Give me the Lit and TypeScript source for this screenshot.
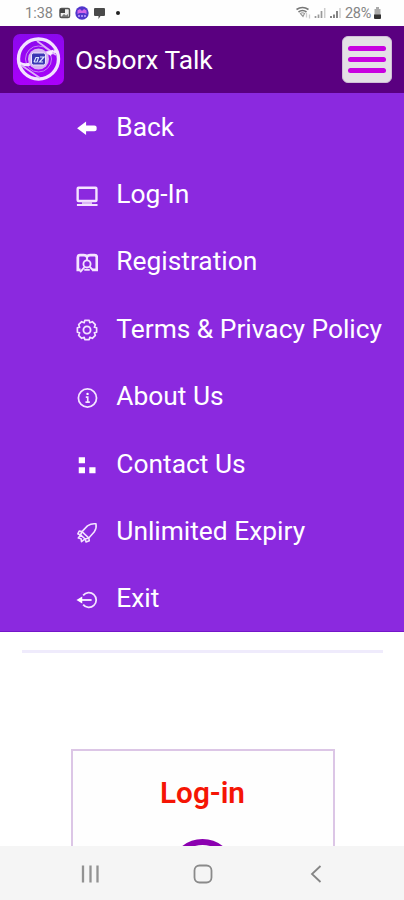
import { LitElement, html, css, svg } from "lit";
import { customElement } from "lit/decorators.js";

const icons = {
  back: svg`<path d="M1.200 12.300 11 5V9.200H20Q22.500 9.200 22.500 11.200v2.300Q22.500 15.500 20 15.500H11v4.200Z" fill="#fff"/>`,
  monitor: svg`<rect x="1.800" y="3" width="20.500" height="14.500" rx="1" stroke-width="2.600"/><path d="M1 21.800h22.500" stroke-width="2.200"/><path d="M6.500 19.500h11" stroke-width="2.400" stroke="#d9b5f4"/>`,
  register: svg`<path d="M5 19.500H2V6Q2 3.500 4.300 3.500H8.500Q11 3.500 12 5.200 13 3.500 15.500 3.500H20.400Q22.700 3.500 22.700 6V19.500H17.500" stroke-width="3"/><circle cx="12" cy="13" r="3.900" stroke-width="2"/><path d="M12 5v4M4.500 22 9.300 16.500M15 16 18 19.500M9 19.500h6" stroke-width="2"/>`,
  gear: svg`<path d="M9.600 1.500H14.400L15 4 17.800 2.900 21.100 6.200 20 9 22.500 9.600V14.400L20 15 21.100 17.800 17.800 21.100 15 20 14.400 22.500H9.600L9 20 6.200 21.100 2.900 17.800 4 15 1.500 14.400V9.600L4 9 2.900 6.200 6.200 2.900 9 4Z" stroke-width="1.800" stroke-linejoin="round"/><circle cx="12" cy="12" r="3.900" stroke-width="2"/>`,
  info: svg`<circle cx="12.500" cy="12" r="9.900" stroke-width="1.900"/><path d="M10.700 11h2.100v5.500M10.300 16.500h4.800" stroke-width="1.800"/><circle cx="12.600" cy="7.500" r="1.300" fill="#fff" stroke="none"/>`,
  blocks: svg`<path d="M3 3.500h6.800v6.500H3zM3 14.500h6.800V21H3zM14.500 14.500h6.800V21h-6.800z" fill="#fff"/>`,
  rocket: svg`<path d="M6.500 10.500 12.500 4.200Q17 1.200 21.800 2 22.800 6.500 19.800 11L14 17.500ZM6.500 10.500 3.500 9.800 2 13 5 14M5 14 2.500 17.500 5.500 18.200 6 21.500 10 18.500M6.500 10.500 5 14 10 18.500 14 17.500M10 18.500 11 21.800 14.500 20.500 14 17.500" stroke-width="1.700" stroke-linejoin="round"/>`,
  exit: svg`<path d="M7.800 7A8 8 0 1 1 7.800 17" stroke-width="1.900"/><path d="M4.500 12H17" stroke-width="2.100"/><path d="M.5 12 6.800 8.200v7.600Z" fill="#fff"/>`,
};

const entries = [
  { label: "Back", icon: icons.back },
  { label: "Log-In", icon: icons.monitor },
  { label: "Registration", icon: icons.register },
  { label: "Terms & Privacy Policy", icon: icons.gear },
  { label: "About Us", icon: icons.info },
  { label: "Contact Us", icon: icons.blocks },
  { label: "Unlimited Expiry", icon: icons.rocket },
  { label: "Exit", icon: icons.exit },
];

@customElement("status-bar")
class StatusBar extends LitElement {
  static styles = css`
    :host { display: flex; justify-content: space-between; align-items: center; box-sizing: border-box; height: 26px; padding: 0 22px 0 25px; background: #fefefe; color: #858585; font: 14.500px Roboto, sans-serif; }
    .group { display: flex; align-items: center; }
    .time { width: 33px; }
    .level { width: 28px; margin-left: 3px; white-space: nowrap; letter-spacing: -0.3px; }
    svg { display: block; }
  `;
  render() {
    return html`
      <div class="group">
        <span class="time">1:38</span>
        <svg width="66" height="16" viewBox="0 0 66 16" fill="none">
          <rect x="2" y="3.500" width="9.500" height="9" rx="1.500" fill="#eee" stroke="#555" stroke-width="1.500"/>
          <path d="M2 4h5v4H2Z" fill="#444"/><path d="m3 12 3-3 2 1.500L10 9v3Z" fill="#777"/>
          <circle cx="24" cy="8" r="6.700" fill="#5136cc"/>
          <path d="M19.500 9V5.500L22 4l2 2 2-2 2.500 1.500V9l-2-1h-5Z" fill="#d264e8"/>
          <path d="M21 12v-2M24 12v-2M27 12v-2" stroke="#c4a5ff" stroke-width="1.500"/>
          <path d="M37 3h9q1 0 1 1v6q0 1-1 1h-3.500l-2 3v-3H37q-1 0-1-1V4q0-1 1-1Z" fill="#4a4a4a"/>
          <circle cx="60" cy="8" r="2" fill="#222"/>
        </svg>
      </div>
      <div class="group">
        <svg width="46" height="16" viewBox="0 0 46 16" fill="none">
          <path d="M.5 4.500Q6.500.5 12.500 4.500M2.500 7Q6.500 4 10.500 7" stroke="#777" stroke-width="1.600"/>
          <path d="M4.500 8.500Q6.500 7 8.500 8.500L7 11.500Z" stroke="#999" stroke-width="1.200"/>
          <path d="M10.500 8v4.500M13.500 13.500V9.500" stroke="#ccc" stroke-width="1.300"/>
          <path d="M19.500 13v-2M22.500 13V9.500M25.500 13V6" stroke="#999" stroke-width="1.700"/><path d="M28.700 13V3" stroke="#ccc" stroke-width="1.500"/>
          <path d="M35 13v-2M38 13V9.500M41 13V6" stroke="#777" stroke-width="1.800"/><path d="M44 13V3" stroke="#ccc" stroke-width="1.500"/>
        </svg>
        <span class="level">28%</span>
        <svg width="9" height="14" viewBox="0 0 9 14"><path d="M3 1h3v2h1.500v6h-6V3H3Z" fill="#aaa"/><path d="M1 8.500h7V12q0 1-1 1H2q-1 0-1-1Z" fill="#333"/></svg>
      </div>`;
  }
}

@customElement("app-header")
class AppHeader extends LitElement {
  static styles = css`
    :host { display: flex; align-items: center; box-sizing: border-box; height: 67px; padding: 0 12px 0 13px; background: #5a0080; }
    h1 { margin: 0 auto 0 11px; color: #fff; font: 400 26.300px Roboto, sans-serif; }
    svg { display: block; }
    .toggle { display: flex; flex-direction: column; justify-content: center; gap: 5.500px; box-sizing: border-box; width: 50.500px; height: 47px; padding: 0 5px; border: 1px solid #d0bed8; border-radius: 6px; background: #e4e0e6; }
    .bar { height: 5.600px; border-radius: 3px; background: #c800e0; }
  `;
  render() {
    return html`
      <svg width="51" height="51" viewBox="0 0 51 51" fill="none">
        <defs><linearGradient id="tile" x2="0" y2="1"><stop stop-color="#8b08ee"/><stop offset="1" stop-color="#aa00fa"/></linearGradient></defs>
        <rect width="51" height="51" rx="7" fill="url(#tile)"/>
        <circle cx="25.500" cy="25" r="20" stroke="#f3e2ff" stroke-width="3.400"/>
        <circle cx="25.500" cy="25" r="13" stroke="#c580f2" stroke-width="1"/>
        <path d="M6.500 29Q12 32 17 30M33 18.500Q39 20.500 44 16.500" stroke="#f5e8ff" stroke-width="3"/>
        <path d="m24 7 19 14M8 31l19 13" stroke="#dcb0f8" stroke-width="1.800"/>
        <path d="M33 18 41 15.500 37.500 22Z" fill="#f8edff"/>
        <circle cx="25.500" cy="25" r="10.500" fill="#d6b4f2"/>
        <rect x="18.500" y="19" width="14" height="12" rx="2" fill="#3b35b4" stroke="#eee4ff"/>
        <path d="m21 28 2-4.500h2.500l-1.500 4.500h-3M27 23h4l-4.500 5h3.500" stroke="#d8e6ff" stroke-width="1.200"/>
      </svg>
      <h1>Osborx Talk</h1>
      <div class="toggle"><div class="bar"></div><div class="bar"></div><div class="bar"></div></div>`;
  }
}

@customElement("nav-menu")
class NavMenu extends LitElement {
  static styles = css`
    :host { display: grid; grid-template-rows: repeat(8, 67.400px); box-sizing: border-box; height: 538.500px; padding-left: 76px; background: #8b29df; border-bottom: 1px solid #7415ca; overflow: hidden; }
    .entry { display: flex; align-items: center; gap: 18.300px; color: #fff; font: 26.350px Roboto, sans-serif; white-space: nowrap; }
    svg { display: block; flex: none; margin-top: 3px; stroke: #f4e4ff; }
    svg path[fill="#fff"] { stroke: none; }
  `;
  render() {
    return html`${entries.map(
      (e) => html`<div class="entry">
        <svg width="22" height="22" viewBox="0 0 24 24" fill="none">${e.icon}</svg>
        <span>${e.label}</span>
      </div>`
    )}`;
  }
}

@customElement("system-nav")
class SystemNav extends LitElement {
  static styles = css`
    :host { display: grid; grid-template-columns: 113px 1fr 113px; justify-items: center; align-items: center; box-sizing: border-box; height: 54px; padding: 2px 32px 0 34px; background: #f5f5f5; }
    svg { display: block; }
  `;
  render() {
    return html`
      <svg width="19" height="20" viewBox="0 0 19 20" stroke="#929292" stroke-width="2.300"><path d="M2 1.500v17M9.500 1.500v17M16.500 1.500v17"/></svg>
      <svg width="20" height="20" viewBox="0 0 20 20" fill="none" stroke="#8a8a8a" stroke-width="1.800"><rect x="1.500" y="1.500" width="17" height="17" rx="5"/></svg>
      <svg width="12" height="20" viewBox="0 0 12 20" fill="none" stroke="#858585" stroke-width="1.800"><path d="m10.500 2-8.500 8 8.500 8"/></svg>`;
  }
}

@customElement("app-root")
class AppRoot extends LitElement {
  static styles = css`
    :host { display: flex; flex-direction: column; height: 900px; overflow: hidden; background: #fff; }
    status-bar, app-header, nav-menu, system-nav { flex: none; }
    .content { flex: 1; min-height: 0; overflow: hidden; display: flex; flex-direction: column; align-items: center; padding-left: 1px; }
    .rule { flex: none; width: 361px; height: 3px; margin: 18px 0 96.500px; background: #efebfc; }
    .card { flex: none; display: flex; flex-direction: column; align-items: center; box-sizing: border-box; width: 264px; height: 260px; border: 2px solid #dcc6e6; background: #fefefe; }
    h2 { margin: 25px 0 0; color: #f51505; font: 600 29.700px/34px Roboto, sans-serif; }
    .avatar { flex: none; box-sizing: border-box; width: 65px; height: 65px; margin-top: 29px; border: 6.500px solid #8b00b0; border-radius: 50%; }
  `;
  render() {
    return html`
      <status-bar></status-bar>
      <app-header></app-header>
      <nav-menu></nav-menu>
      <main class="content">
        <div class="rule"></div>
        <section class="card"><h2>Log-in</h2><div class="avatar"></div></section>
      </main>
      <system-nav></system-nav>`;
  }
}
